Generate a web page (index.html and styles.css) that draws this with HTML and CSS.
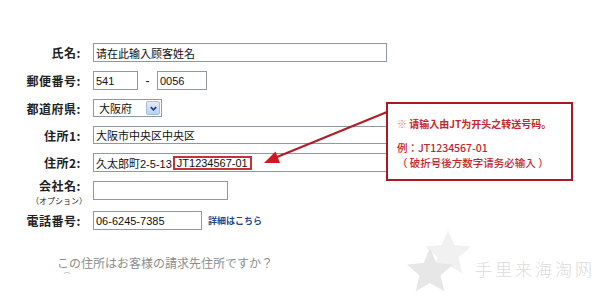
FILE: index.html
```html
<!doctype html>
<html lang="ja">
    <head>
        <meta charset="UTF-8" />
        <meta name="viewport" content="width=device-width, initial-scale=1.0" />
        <title>お届け先住所</title>
        <link rel="stylesheet" href="styles.css">
    </head>
    <body>
        <div class="page">
            <form class="address-form">
                <div class="row">
                    <label class="label">氏名:</label>
                    <input type="text" class="field field-name" value="请在此输入顾客姓名" />
                </div>
                <div class="row">
                    <label class="label">郵便番号:</label>
                    <input type="text" class="field field-zip1" value="541" />
                    <span class="dash">-</span>
                    <input type="text" class="field field-zip2" value="0056" />
                </div>
                <div class="row row-short">
                    <label class="label">都道府県:</label>
                    <div class="select">
                        <span class="select-value">大阪府</span>
                        <span class="select-btn">
                            <svg viewBox="0 0 10 10" width="9" height="9">
                                <polyline points="2,3.5 5,6.5 8,3.5" fill="none" stroke="#1d3f8a" stroke-width="2" />
                            </svg>
                        </span>
                    </div>
                </div>
                <div class="row row-short">
                    <label class="label">住所1:</label>
                    <input type="text" class="field field-wide" value="大阪市中央区中央区" />
                </div>
                <div class="row">
                    <label class="label">住所2:</label>
                    <div class="field field-wide">久太郎町2-5-13<span class="mark">JT1234567-01</span></div>
                </div>
                <div class="row row-company">
                    <label class="label label-stack">
                        <span class="label-main">会社名:</span>
                        <small class="sub">（オプション）</small>
                    </label>
                    <input type="text" class="field field-company" value="" />
                </div>
                <div class="row row-phone">
                    <label class="label">電話番号:</label>
                    <input type="text" class="field field-phone" value="06-6245-7385" />
                    <a class="detail-link" href="#">詳細はこちら</a>
                </div>
            </form>

            <p class="question">この住所はお客様の請求先住所ですか？</p>
            <span class="radio"></span>

            <!-- pointer from the note to the JT number -->
            <svg class="pointer" viewBox="0 0 600 304" width="600" height="304">
                <line x1="387" y1="112" x2="277" y2="157" stroke="#b01c22" stroke-width="2" />
                <polygon points="264,163 280,163 275.5,151.5" fill="#d01820" />
            </svg>

            <div class="note">
                <p class="note-main"><span class="note-mark">※</span> 请输入由JT为开头之转送号码。</p>
                <p class="note-line">例：JT1234567-01</p>
                <p class="note-line">（ 破折号後方数字请务必输入 ）</p>
            </div>

            <div class="watermark">
                <svg class="stars" viewBox="0 0 80 80" width="80" height="80">
                    <polygon fill="#f1f1f1" points="50,2 56.5,17 73,18.5 60.5,29.5 64.5,45.5 50,37 35.5,45.5 39.5,29.5 27,18.5 43.5,17" />
                    <polygon fill="#e7e7e7" points="32,20 38.5,35 55,36.5 42.5,47.5 46.5,63.5 32,55 17.5,63.5 21.5,47.5 9,36.5 25.5,35" />
                </svg>
                <span class="watermark-text">手里来海淘网</span>
            </div>
        </div>
    </body>
</html>
```

FILE: styles.css
```css
* {
    box-sizing: border-box;
}

body {
    margin: 0;
    background: #fff;
    color: #111;
    font-family: "Liberation Sans", "Noto Sans CJK JP", sans-serif;
}

.page {
    position: relative;
    width: 600px;
    height: 304px;
    overflow: hidden;
}

.address-form {
    display: flex;
    flex-direction: column;
    gap: 9px;
    padding-top: 43px;
}

.row {
    display: flex;
    align-items: center;
    height: 19px;
}

.row-short {
    height: 18px;
}

.row-phone {
    margin-top: 2px;
}

.label {
    width: 81px;
    margin-right: 12px;
    text-align: right;
    font-family: "Noto Sans CJK JP", sans-serif;
    font-weight: 700;
    font-size: 12px;
    line-height: 19px;
    letter-spacing: 0.5px;
    color: #222;
}

.label-stack {
    display: flex;
    flex-direction: column;
    align-items: flex-end;
    align-self: flex-start;
    margin-top: -4px;
    line-height: 17px;
}

.label-stack .sub {
    margin: 1px -6px 0 0;
    font-size: 8px;
    font-weight: 400;
    letter-spacing: 0;
    line-height: 12px;
}

.field {
    height: 100%;
    margin: 0;
    padding: 0 2px;
    border: 1px solid #8d99a4;
    border-radius: 0;
    background: #fff;
    font-family: "Liberation Sans", "Noto Sans CJK SC", sans-serif;
    font-size: 11px;
    color: #111;
    outline: none;
}

div.field {
    display: flex;
    align-items: center;
}

.field-name {
    width: 294px;
}

.field-zip1 {
    width: 45px;
}

.field-zip2 {
    width: 50px;
}

.field-wide {
    width: 330px;
}

.field-company {
    width: 135px;
}

.field-phone {
    width: 109px;
}

.dash {
    width: 19px;
    text-align: center;
    font-size: 12px;
}

.mark {
    margin-left: 1px;
    padding: 0 2px;
    border: 2px solid #c4323a;
    line-height: 10px;
}

.select {
    display: flex;
    align-items: center;
    justify-content: space-between;
    width: 69px;
    height: 100%;
    padding: 0 1px 0 5px;
    border: 1px solid #8d99a4;
    font-family: "Noto Sans CJK JP", sans-serif;
    font-size: 11px;
}

.select-btn {
    display: flex;
    align-items: center;
    justify-content: center;
    width: 14px;
    height: 14px;
    border: 1px solid #a8bde0;
    border-radius: 2px;
    background: linear-gradient(#e2ebf8, #bcd0ee);
}

.detail-link {
    margin-left: 6px;
    font-family: "Noto Sans CJK JP", sans-serif;
    font-size: 9px;
    font-weight: 700;
    color: #1f4b8c;
    text-decoration: none;
}

.question {
    margin: 26px 0 0 57px;
    font-family: "Noto Sans CJK JP", sans-serif;
    font-size: 12px;
    line-height: 14px;
    color: #8c8c8c;
}

.radio {
    display: block;
    width: 10px;
    height: 10px;
    margin: 2px 0 0 62px;
    border: 1px solid transparent;
    border-top-color: #c8c8c8;
    border-radius: 50%;
}

/* overlay: pointer line + note box */
.pointer {
    position: absolute;
    top: 0;
    left: 0;
    pointer-events: none;
}

.note {
    position: absolute;
    left: 386px;
    top: 102px;
    width: 187px;
    height: 79px;
    padding: 13px 0 0 9px;
    border: 2px solid #a9191f;
    background: #fff;
    color: #c4262b;
    font-family: "Noto Sans CJK SC", sans-serif;
}

.note p {
    margin: 0;
}

.note-main {
    font-size: 10px;
    font-weight: 700;
    line-height: 14px;
    margin-bottom: 10px !important;
}

.note-mark {
    color: #e08488;
    font-weight: 400;
}

.note-line {
    font-size: 10.5px;
    line-height: 14px;
    font-weight: 500;
}

.note-line + .note-line {
    line-height: 15px;
}

.watermark {
    position: absolute;
    left: 398px;
    top: 228px;
    display: flex;
    align-items: center;
}

.stars {
    display: block;
}

.watermark-text {
    margin: 0 0 0 -3px;
    font-family: "Noto Sans CJK SC", sans-serif;
    font-weight: 300;
    font-size: 17px;
    letter-spacing: 3px;
    color: #dcdcdc;
}
```
